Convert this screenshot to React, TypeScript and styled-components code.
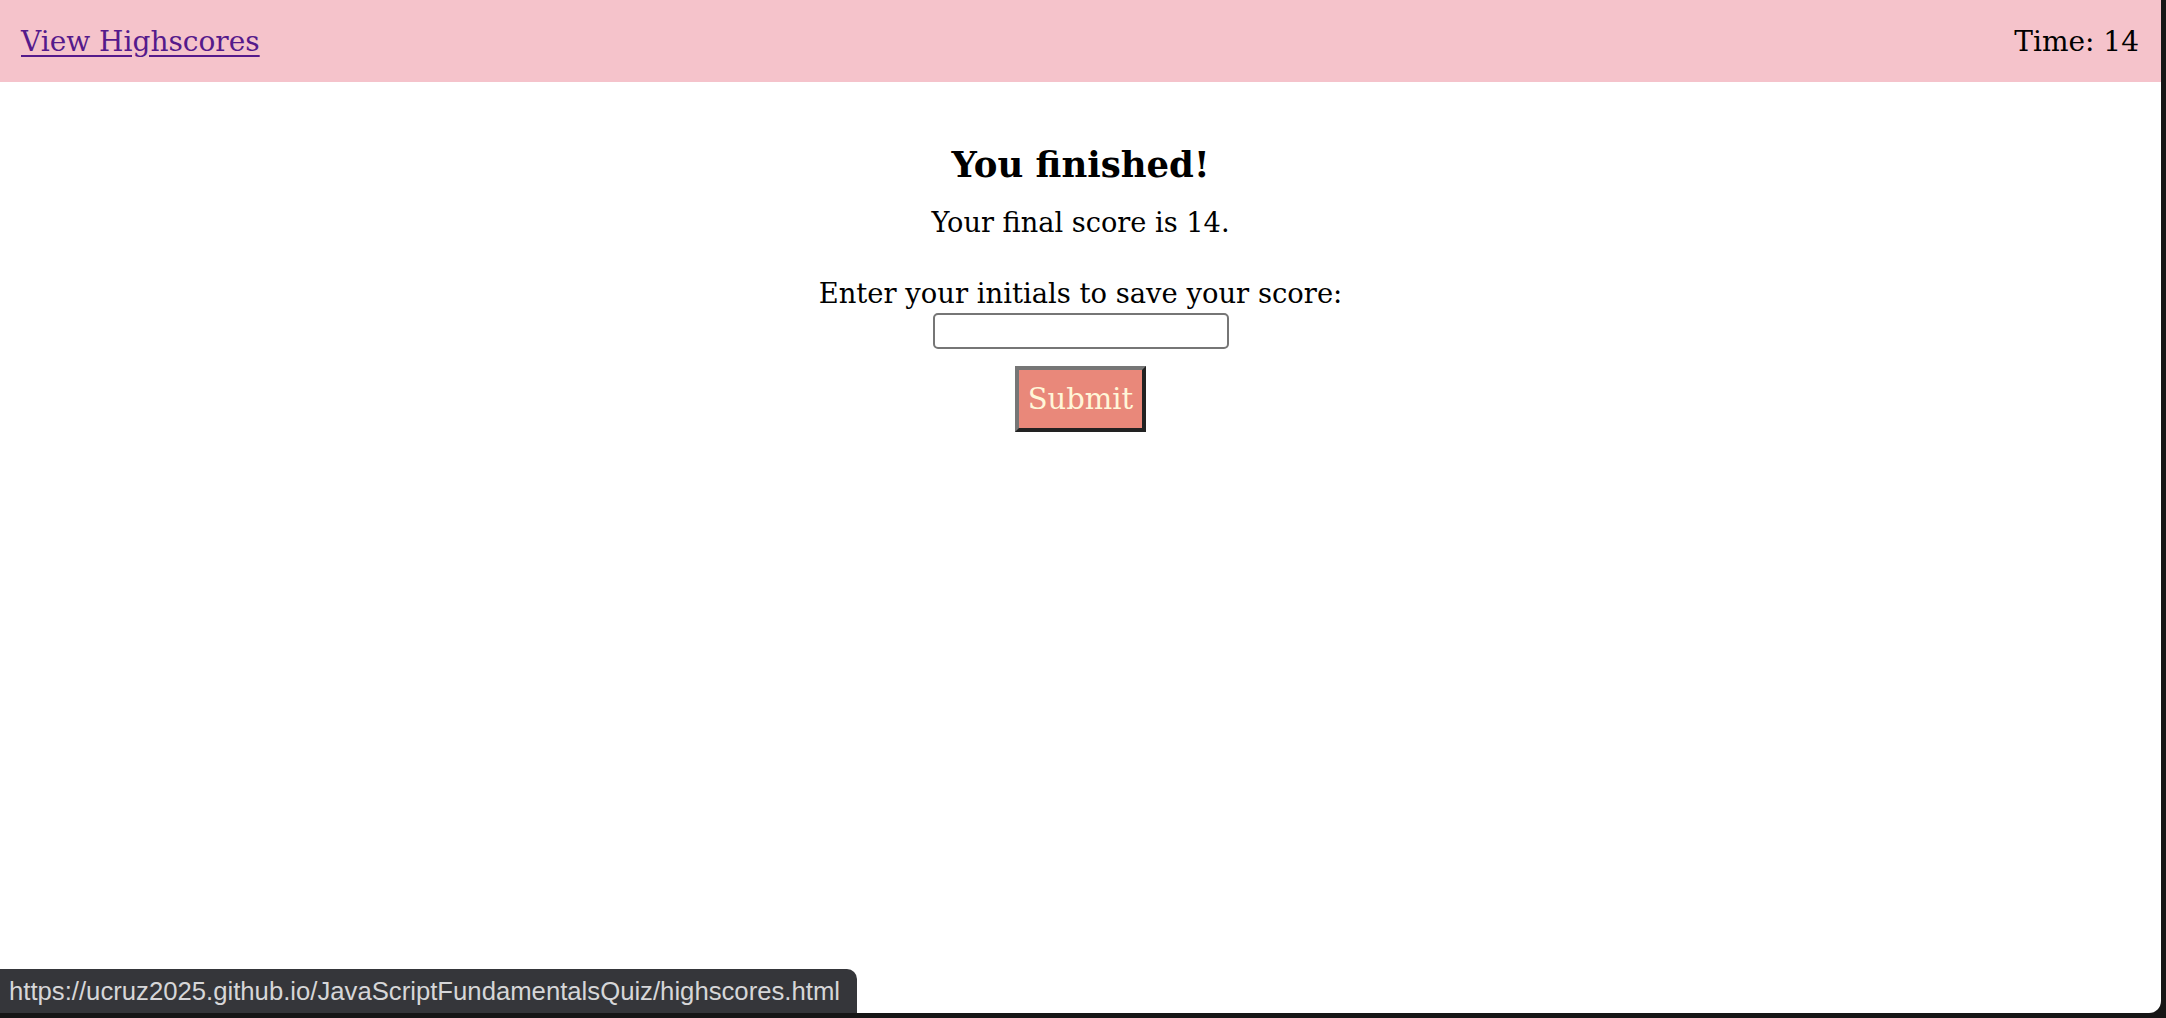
import React from "react";
import styled, { createGlobalStyle } from "styled-components";

const GlobalStyle = createGlobalStyle`
  html, body { margin: 0; padding: 0; background: #161616; }
  body { font-family: "DejaVu Serif", Georgia, serif; }
`;

const Frame = styled.div`
  width: 2166px;
  height: 1018px;
  background: #161616;
  position: relative;
  overflow: hidden;
`;

const Page = styled.div`
  width: 2161px;
  height: 1013px;
  background: #ffffff;
  border-bottom-right-radius: 12px;
  display: flex;
  flex-direction: column;
  overflow: hidden;
`;

const Header = styled.header`
  height: 82px;
  background: #f5c3cb;
  display: flex;
  align-items: center;
  justify-content: space-between;
  padding: 0 22px 0 21px;
  font-size: 28px;
  color: #000;
`;

const HighscoreLink = styled.a`
  color: #551a8b;
  text-decoration: underline;
  text-underline-offset: 4px;
`;

const Timer = styled.span``;

const Main = styled.main`
  display: flex;
  flex-direction: column;
  align-items: center;
  padding-top: 58px;
`;

const Title = styled.h1`
  margin: 0 0 14px;
  font-size: 35.5px;
  font-weight: bold;
  line-height: 1.4;
`;

const Score = styled.p`
  margin: 0;
  font-size: 27.2px;
  line-height: 1.4;
`;

const Form = styled.form`
  display: flex;
  flex-direction: column;
  align-items: center;
  margin-top: 33px;
`;

const Label = styled.label`
  font-size: 27.4px;
  line-height: 1.4;
`;

const Input = styled.input`
  width: 296px;
  height: 36px;
  box-sizing: border-box;
  border: 2px solid #767676;
  border-radius: 5px;
  background: #fff;
  margin-top: 0;
`;

const SubmitButton = styled.button`
  margin-top: 17px;
  width: 131px;
  height: 66px;
  box-sizing: border-box;
  background: #e9887a;
  color: #fff6d8;
  font-family: "DejaVu Serif", Georgia, serif;
  font-size: 29px;
  border-style: solid;
  border-width: 4px;
  border-color: #767676 #222222 #222222 #767676;
  padding: 0;
  cursor: pointer;
`;

const StatusBar = styled.div`
  position: absolute;
  left: 0;
  bottom: 5px;
  width: 857px;
  height: 44px;
  box-sizing: border-box;
  background: #35363a;
  border-top-right-radius: 10px;
  color: #d6d6d8;
  font-family: "Liberation Sans", Arial, sans-serif;
  font-size: 25.7px;
  display: flex;
  align-items: center;
  padding-left: 9px;
  white-space: nowrap;
`;

export default function App() {
  return (
    <>
      <GlobalStyle />
      <Frame>
        <Page>
          <Header>
            <HighscoreLink href="#">View Highscores</HighscoreLink>
            <Timer>Time: 14</Timer>
          </Header>
          <Main>
            <Title>You finished!</Title>
            <Score>Your final score is 14.</Score>
            <Form onSubmit={(e) => e.preventDefault()}>
              <Label htmlFor="initials">Enter your initials to save your score:</Label>
              <Input id="initials" type="text" />
              <SubmitButton type="submit">Submit</SubmitButton>
            </Form>
          </Main>
        </Page>
        <StatusBar>https://ucruz2025.github.io/JavaScriptFundamentalsQuiz/highscores.html</StatusBar>
      </Frame>
    </>
  );
}
